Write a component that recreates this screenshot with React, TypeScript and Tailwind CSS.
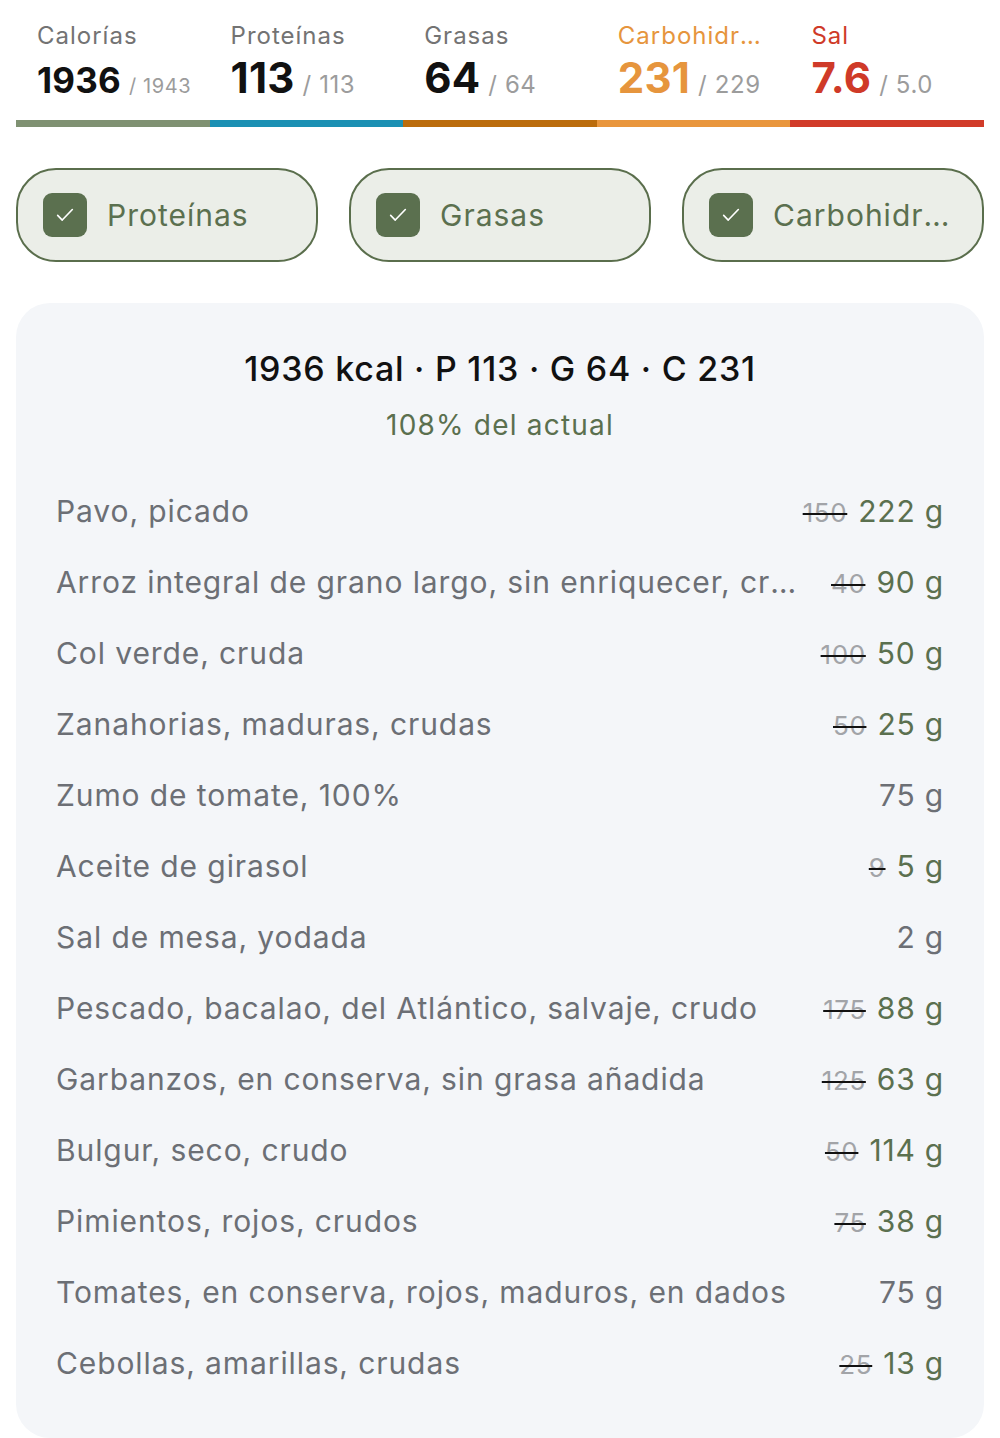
import React from "react";

const stats = [
  { label: "Calorías", value: "1936", target: "1943", labelCls: "text-[#737373]", valueCls: "text-[#111111]", bar: "bg-[#7f9172]", small: true },
  { label: "Proteínas", value: "113", target: "113", labelCls: "text-[#737373]", valueCls: "text-[#111111]", bar: "bg-[#1b90b3]", small: false },
  { label: "Grasas", value: "64", target: "64", labelCls: "text-[#737373]", valueCls: "text-[#111111]", bar: "bg-[#bb6c0c]", small: false },
  { label: "Carbohidratos", value: "231", target: "229", labelCls: "text-[#e6953d]", valueCls: "text-[#e6953d]", bar: "bg-[#e9963d]", small: false },
  { label: "Sal", value: "7.6", target: "5.0", labelCls: "text-[#cf3a28]", valueCls: "text-[#cf3a28]", bar: "bg-[#d13b29]", small: false },
];

const chips = ["Proteínas", "Grasas", "Carbohidratos"];

const rows: { name: string; old?: string; amount: string }[] = [
  { name: "Pavo, picado", old: "150", amount: "222 g" },
  { name: "Arroz integral de grano largo, sin enriquecer, crudo", old: "40", amount: "90 g" },
  { name: "Col verde, cruda", old: "100", amount: "50 g" },
  { name: "Zanahorias, maduras, crudas", old: "50", amount: "25 g" },
  { name: "Zumo de tomate, 100%", amount: "75 g" },
  { name: "Aceite de girasol", old: "9", amount: "5 g" },
  { name: "Sal de mesa, yodada", amount: "2 g" },
  { name: "Pescado, bacalao, del Atlántico, salvaje, crudo", old: "175", amount: "88 g" },
  { name: "Garbanzos, en conserva, sin grasa añadida", old: "125", amount: "63 g" },
  { name: "Bulgur, seco, crudo", old: "50", amount: "114 g" },
  { name: "Pimientos, rojos, crudos", old: "75", amount: "38 g" },
  { name: "Tomates, en conserva, rojos, maduros, en dados", amount: "75 g" },
  { name: "Cebollas, amarillas, crudas", old: "25", amount: "13 g" },
];

export default function App() {
  return (
    <div
      className="w-[1000px] bg-white px-4 pt-5 pb-0"
      style={{ fontFamily: "Inter, 'Noto Sans', sans-serif" }}
    >
      {/* Stats */}
      <div className="grid grid-cols-5">
        {stats.map((s) => (
          <div key={s.label} className="flex flex-col">
            <div className={`pl-[21px] pr-[22px] text-[24px] leading-[32px] tracking-[1px] truncate ${s.labelCls}`}>
              {s.label}
            </div>
            <div className="pl-[21px] mt-[6px] h-[44px]">
              <div className="flex items-baseline whitespace-nowrap">
                <span
                  className={`font-bold tracking-[0.2px] ${s.valueCls} ${
                    s.small ? "text-[35px] leading-[44px]" : "text-[42px] leading-[40px]"
                  }`}
                >
                  {s.value}
                </span>
                <span className={`ml-[8px] text-[#9c9c9c] tracking-[0.6px] ${s.small ? "text-[20px]" : "text-[24px]"}`}>
                  / {s.target}
                </span>
              </div>
            </div>
            <div className={`mt-[18px] h-[7px] ${s.bar}`} />
          </div>
        ))}
      </div>

      {/* Chips */}
      <div className="mt-[41px] grid grid-cols-3 gap-[31px]">
        {chips.map((c) => (
          <div
            key={c}
            className="h-[94px] min-w-0 rounded-[40px] border-2 border-[#5a6e4c] bg-[#ebeee8] flex items-center pl-[25px] pr-[24px] gap-[20px]"
          >
            <div className="w-[44px] h-[44px] shrink-0 rounded-[9px] bg-[#5b704f] flex items-center justify-center">
              <svg width="22" height="22" viewBox="0 0 24 24" fill="none">
                <path d="M4 12.5l5 5L20 6" stroke="white" strokeWidth="1.8" strokeLinecap="round" strokeLinejoin="round" />
              </svg>
            </div>
            <span className="min-w-0 text-[30px] text-[#5b704f] tracking-[1px] truncate">{c}</span>
          </div>
        ))}
      </div>

      {/* Card */}
      <div className="mt-[41px] rounded-[34px] bg-[#f4f6f9] px-[40px] pt-[46px] pb-[39px]">
        <div className="text-center text-[34px] leading-[40px] font-medium text-[#111111] tracking-[0.75px]">
          1936 kcal · P 113 · G 64 · C 231
        </div>
        <div className="mt-[18px] text-center text-[28px] leading-[36px] text-[#5b704f] tracking-[1.2px]">
          108% del actual
        </div>
        <div className="mt-[33px] flex flex-col">
          {rows.map((r) => (
            <div key={r.name} className="h-[71px] flex items-center gap-[32px]">
              <span className="flex-1 min-w-0 truncate text-[30px] text-[#6c6f75] tracking-[0.9px]">{r.name}</span>
              <span className="shrink-0 flex items-baseline gap-[11px] whitespace-nowrap">
                {r.old && (
                  <span className="text-[26px] text-[#a2a4a8] tracking-[0.6px] line-through decoration-[#111111] decoration-2">
                    {r.old}
                  </span>
                )}
                <span className={`text-[30px] tracking-[0.8px] ${r.old ? "text-[#5b704f]" : "text-[#6c6f75]"}`}>{r.amount}</span>
              </span>
            </div>
          ))}
        </div>
      </div>
    </div>
  );
}
